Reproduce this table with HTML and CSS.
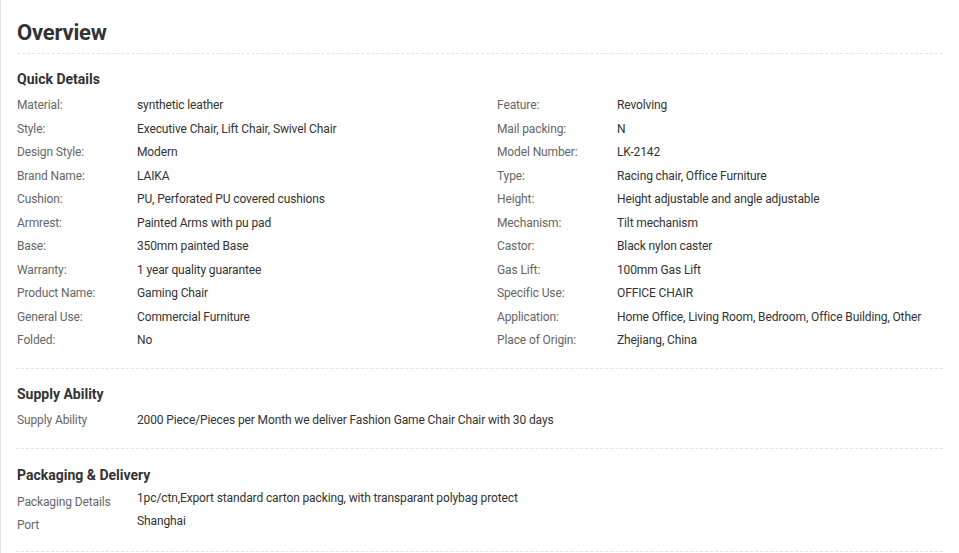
FILE: index.html
```html
<!DOCTYPE html>
<html>
<head>
    <link rel="stylesheet" href="styles.css">
</head>

<body>
    <div id="overview">
        <h1 class="title">Overview</h1>

        <div class="block">
            <h2>Quick Details</h2>
            <div class="quick-grid">
                <div class="item"><span class="label">Material:</span><span class="value">synthetic leather</span></div>
                <div class="item"><span class="label">Feature:</span><span class="value">Revolving</span></div>
                <div class="item"><span class="label">Style:</span><span class="value">Executive Chair, Lift Chair, Swivel Chair</span></div>
                <div class="item"><span class="label">Mail packing:</span><span class="value">N</span></div>
                <div class="item"><span class="label">Design Style:</span><span class="value">Modern</span></div>
                <div class="item"><span class="label">Model Number:</span><span class="value">LK-2142</span></div>
                <div class="item"><span class="label">Brand Name:</span><span class="value">LAIKA</span></div>
                <div class="item"><span class="label">Type:</span><span class="value">Racing chair, Office Furniture</span></div>
                <div class="item"><span class="label">Cushion:</span><span class="value">PU, Perforated PU covered cushions</span></div>
                <div class="item"><span class="label">Height:</span><span class="value">Height adjustable and angle adjustable</span></div>
                <div class="item"><span class="label">Armrest:</span><span class="value">Painted Arms with pu pad</span></div>
                <div class="item"><span class="label">Mechanism:</span><span class="value">Tilt mechanism</span></div>
                <div class="item"><span class="label">Base:</span><span class="value">350mm painted Base</span></div>
                <div class="item"><span class="label">Castor:</span><span class="value">Black nylon caster</span></div>
                <div class="item"><span class="label">Warranty:</span><span class="value">1 year quality guarantee</span></div>
                <div class="item"><span class="label">Gas Lift:</span><span class="value">100mm Gas Lift</span></div>
                <div class="item"><span class="label">Product Name:</span><span class="value">Gaming Chair</span></div>
                <div class="item"><span class="label">Specific Use:</span><span class="value">OFFICE CHAIR</span></div>
                <div class="item"><span class="label">General Use:</span><span class="value">Commercial Furniture</span></div>
                <div class="item"><span class="label">Application:</span><span class="value">Home Office, Living Room, Bedroom, Office Building, Other</span></div>
                <div class="item"><span class="label">Folded:</span><span class="value">No</span></div>
                <div class="item"><span class="label">Place of Origin:</span><span class="value">Zhejiang, China</span></div>
            </div>
        </div>

        <div class="block">
            <h2>Supply Ability</h2>
            <div class="item supply"><span class="label">Supply Ability</span><span class="value">2000 Piece/Pieces per Month we deliver Fashion Game Chair Chair with 30 days</span></div>
        </div>

        <div class="block packaging">
            <h2>Packaging &amp; Delivery</h2>
            <div class="item pack"><span class="label">Packaging Details</span><span class="value">1pc/ctn,Export standard carton packing, with transparant polybag protect</span></div>
            <div class="item pack"><span class="label">Port</span><span class="value">Shanghai</span></div>
        </div>
    </div>
</body>

</html>
```

FILE: styles.css
```css
/* General */
body, html {
    margin: 0;
    padding: 0;
    background: #fff;
}
body {
    font-family: Roboto, "Liberation Sans", sans-serif;
    color: #333;
    font-size: 12px;
}
#overview {
    border-left: 1px solid #e3e3e3;
    padding: 0 16px 0 15px;
    min-height: 553px;
    box-sizing: border-box;
}

/* Headings */
.title {
    margin: 0 0 0 1px;
    padding: 18px 0 5px 0;
    font-size: 22px; line-height: 30px;
    font-weight: 700;
    letter-spacing: -0.2px;
    color: #333;
    border-bottom: 1px dashed #e4e4e4;
}
.block {
    padding: 15px 0 15.5px 1px;
    border-bottom: 1px dashed #e4e4e4;
}
.block h2 {
    margin: 0 0 5px 0;
    font-size: 14px; line-height: 20px;
    font-weight: 700;
    color: #333;
}
.packaging { padding-top: 16px; padding-bottom: 16px; }
.packaging h2 { margin-bottom: 4px; }

/* Rows */
.quick-grid {
    display: grid;
    grid-template-columns: 480px 1fr;
}
.item {
    display: flex;
    height: 23.5px; line-height: 23.5px;
    letter-spacing: -0.12px;
}
.item .label {
    flex-shrink: 0;
    width: 120px;
    color: #666;
}
.item .value {
    color: #333;
    white-space: nowrap;
}
.supply { margin-top: 1px; }
.pack { height: 23px; line-height: 19px; }
.pack .label { padding-top: 4px; }
```
